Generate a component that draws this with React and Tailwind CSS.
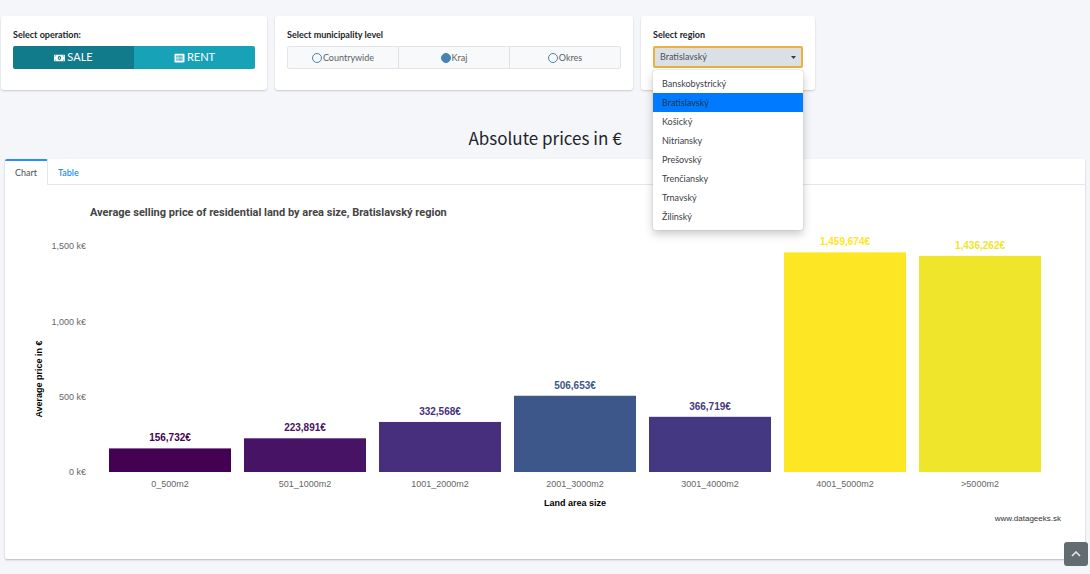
import { useState } from "react";
import { FaListAlt, FaMoneyBillAlt } from "react-icons/fa";

const levels = ["Countrywide", "Kraj", "Okres"];

const regions = [
  "Banskobystrický",
  "Bratislavský",
  "Košický",
  "Nitriansky",
  "Prešovský",
  "Trenčiansky",
  "Trnavský",
  "Žilinský",
];

const prices = [
  { size: "0_500m2", price: 156732, color: "#440154" },
  { size: "501_1000m2", price: 223891, color: "#471365" },
  { size: "1001_2000m2", price: 332568, color: "#472f7d" },
  { size: "2001_3000m2", price: 506653, color: "#3e578a" },
  { size: "3001_4000m2", price: 366719, color: "#453882" },
  { size: "4001_5000m2", price: 1459674, color: "#fde725" },
  { size: ">5000m2", price: 1436262, color: "#efe52a" },
];

const ticks = [0, 500, 1000, 1500];
const BASE = 287;
const toY = (value) => BASE - (value / 1000000) * 150.5;

function Card({ className, children }) {
  return (
    <section className={`h-[74px] rounded-[3px] bg-white px-3 pt-3 shadow-[0_1px_2px_rgba(0,0,0,0.18)] ${className}`}>
      {children}
    </section>
  );
}

function OperationPicker() {
  const [operation, setOperation] = useState("SALE");
  const items = [
    { name: "SALE", Icon: FaMoneyBillAlt },
    { name: "RENT", Icon: FaListAlt },
  ];
  return (
    <Card className="w-[266px]">
      <p id="operation" className="mb-1 h-[14px] text-[9px] leading-[14px] font-bold">Select operation:</p>
      <div role="group" aria-labelledby="operation" className="flex h-[23px] overflow-hidden rounded-[2px]">
        {items.map(({ name, Icon }) => (
          <button
            key={name}
            type="button"
            aria-pressed={operation === name}
            onClick={() => setOperation(name)}
            className={`flex flex-1 items-center justify-center gap-0.5 text-[11px] text-white ${
              operation === name ? "bg-[#117a8b]" : "bg-[#17a2b8]"
            }`}
          >
            <Icon className="h-[10px] w-[11px]" />
            {name}
          </button>
        ))}
      </div>
    </Card>
  );
}

function LevelPicker() {
  const [level, setLevel] = useState("Kraj");
  return (
    <Card className="w-[358px]">
      <fieldset>
        <legend className="mb-1 h-[14px] text-[9px] leading-[14px] font-bold">Select municipality level</legend>
        <div className="flex h-[23px] divide-x divide-[#dfe1e4] rounded-[2px] border border-[#e3e5e8] bg-[#f8f9fa]">
          {levels.map((name) => (
            <label key={name} className="flex flex-1 items-center justify-center gap-px text-[9px] text-[#5a5f64]">
              <input
                type="radio"
                name="level"
                checked={level === name}
                onChange={() => setLevel(name)}
                className="size-[10px] appearance-none rounded-full border border-[#4682b4] checked:bg-[#4682b4]"
              />
              {name}
            </label>
          ))}
        </div>
      </fieldset>
    </Card>
  );
}

function RegionPicker({ region, onChange }) {
  const [open, setOpen] = useState(true);
  return (
    <Card className="w-[174px]">
      <label htmlFor="region" className="mb-1 block h-[14px] text-[9px] leading-[14px] font-bold">Select region</label>
      <div className="relative">
        <select
          id="region"
          value={region}
          onChange={(e) => onChange(e.target.value)}
          onMouseDown={(e) => {
            e.preventDefault();
            setOpen(!open);
          }}
          className="block h-[22px] w-full appearance-none rounded-[2px] border-2 border-[#eeb03c] bg-[#dae0e5] px-[5px] text-[9px] text-[#4b5055] outline-none"
        >
          {regions.map((name) => (
            <option key={name}>{name}</option>
          ))}
        </select>
        <svg viewBox="0 0 5 3" className="pointer-events-none absolute top-[10px] right-[7px] h-[3px] w-[5px]">
          <path d="M0 0h5L2.5 3z" fill="#343a40" />
        </svg>
        {open && (
          <ul
            role="listbox"
            aria-label="Select region"
            className="absolute inset-x-0 top-6 z-10 rounded-[2px] bg-white pt-1 pb-1 shadow-[0_4px_10px_rgba(0,0,0,0.22),0_0_1px_rgba(0,0,0,0.35)]"
          >
            {regions.map((name) => (
              <li
                key={name}
                role="option"
                aria-selected={region === name}
                onClick={() => {
                  onChange(name);
                  setOpen(false);
                }}
                className={`h-[19px] px-[9px] text-[9px] leading-[19px] ${
                  region === name ? "bg-[#007bff] text-[#1c3650]" : "text-[#3c4146]"
                }`}
              >
                {name}
              </li>
            ))}
          </ul>
        )}
      </div>
    </Card>
  );
}

function PriceChart({ region }) {
  return (
    <svg viewBox="0 0 1080 374" className="block w-full font-['Liberation_Sans',sans-serif] text-[9px]">
      <text x="85" y="31" className="fill-[#444] font-['Roboto',sans-serif] text-[11px] font-bold">
        Average selling price of residential land by area size, {region} region
      </text>
      {ticks.map((tick) => (
        <text key={tick} x="81" y={toY(tick * 1000) + 3} textAnchor="end" className="fill-[#666]">
          {tick.toLocaleString("en-US")} k€
        </text>
      ))}
      <text transform="translate(37 194) rotate(-90)" textAnchor="middle" className="fill-black font-bold">
        Average price in €
      </text>
      {prices.map(({ size, price, color }, i) => {
        const center = 165 + i * 135;
        return (
          <g key={size}>
            <rect x={center - 61} y={toY(price)} width="122" height={BASE - toY(price)} fill={color} />
            <text x={center} y={toY(price) - 7} textAnchor="middle" fill={color} className="text-[10px] font-bold">
              {price.toLocaleString("en-US")}€
            </text>
            <text x={center} y="302" textAnchor="middle" className="fill-[#666]">
              {size}
            </text>
          </g>
        );
      })}
      <text x="570" y="321" textAnchor="middle" className="fill-black font-bold">
        Land area size
      </text>
      <text x="1056" y="336" textAnchor="end" className="fill-[#333] text-[8px]">
        www.datageeks.sk
      </text>
    </svg>
  );
}

export default function App() {
  const [region, setRegion] = useState("Bratislavský");
  const [tab, setTab] = useState("Chart");
  return (
    <div className="min-h-screen bg-[#f4f6f9] pt-4 font-['Lato','Noto_Sans',sans-serif] text-[#212529]">
      <div className="flex gap-2 pl-px">
        <OperationPicker />
        <LevelPicker />
        <RegionPicker region={region} onChange={setRegion} />
      </div>

      <h1 className="mt-9 text-center font-['Noto_Sans_CJK_SC',sans-serif] text-[17px] leading-6">
        Absolute prices in €
      </h1>

      <main className="mx-[5px] mt-[9px] rounded-[2px] bg-white shadow-[0_1px_2px_rgba(0,0,0,0.25)]">
        <div role="tablist" className="flex h-[26px] border-b border-[#e3e6ea]">
          {["Chart", "Table"].map((name) => (
            <button
              key={name}
              type="button"
              role="tab"
              aria-selected={tab === name}
              onClick={() => setTab(name)}
              className={`h-[26px] border-t-2 px-[10px] text-[9px] ${
                tab === name
                  ? "rounded-t-[2px] border-r border-t-[#2b8cff] border-r-[#e3e6ea] bg-white text-[#495057]"
                  : "border-t-transparent text-[#007bff]"
              }`}
            >
              {name}
            </button>
          ))}
        </div>
        {tab === "Chart" ? (
          <PriceChart region={region} />
        ) : (
          <table className="m-4 text-[10px]">
            <tbody>
              {prices.map(({ size, price }) => (
                <tr key={size}>
                  <th className="pr-6 text-left">{size}</th>
                  <td>{price.toLocaleString("en-US")}€</td>
                </tr>
              ))}
            </tbody>
          </table>
        )}
      </main>

      <button
        type="button"
        aria-label="Back to top"
        onClick={() => window.scrollTo(0, 0)}
        className="fixed right-[2px] bottom-2 flex size-6 items-center justify-center rounded-[3px] bg-[#636c70]"
      >
        <svg viewBox="0 0 10 6" className="h-[6px] w-[10px]" fill="none" stroke="#e4e7e9" strokeWidth="1.6">
          <path d="M1 5l4-4 4 4" />
        </svg>
      </button>
    </div>
  );
}
